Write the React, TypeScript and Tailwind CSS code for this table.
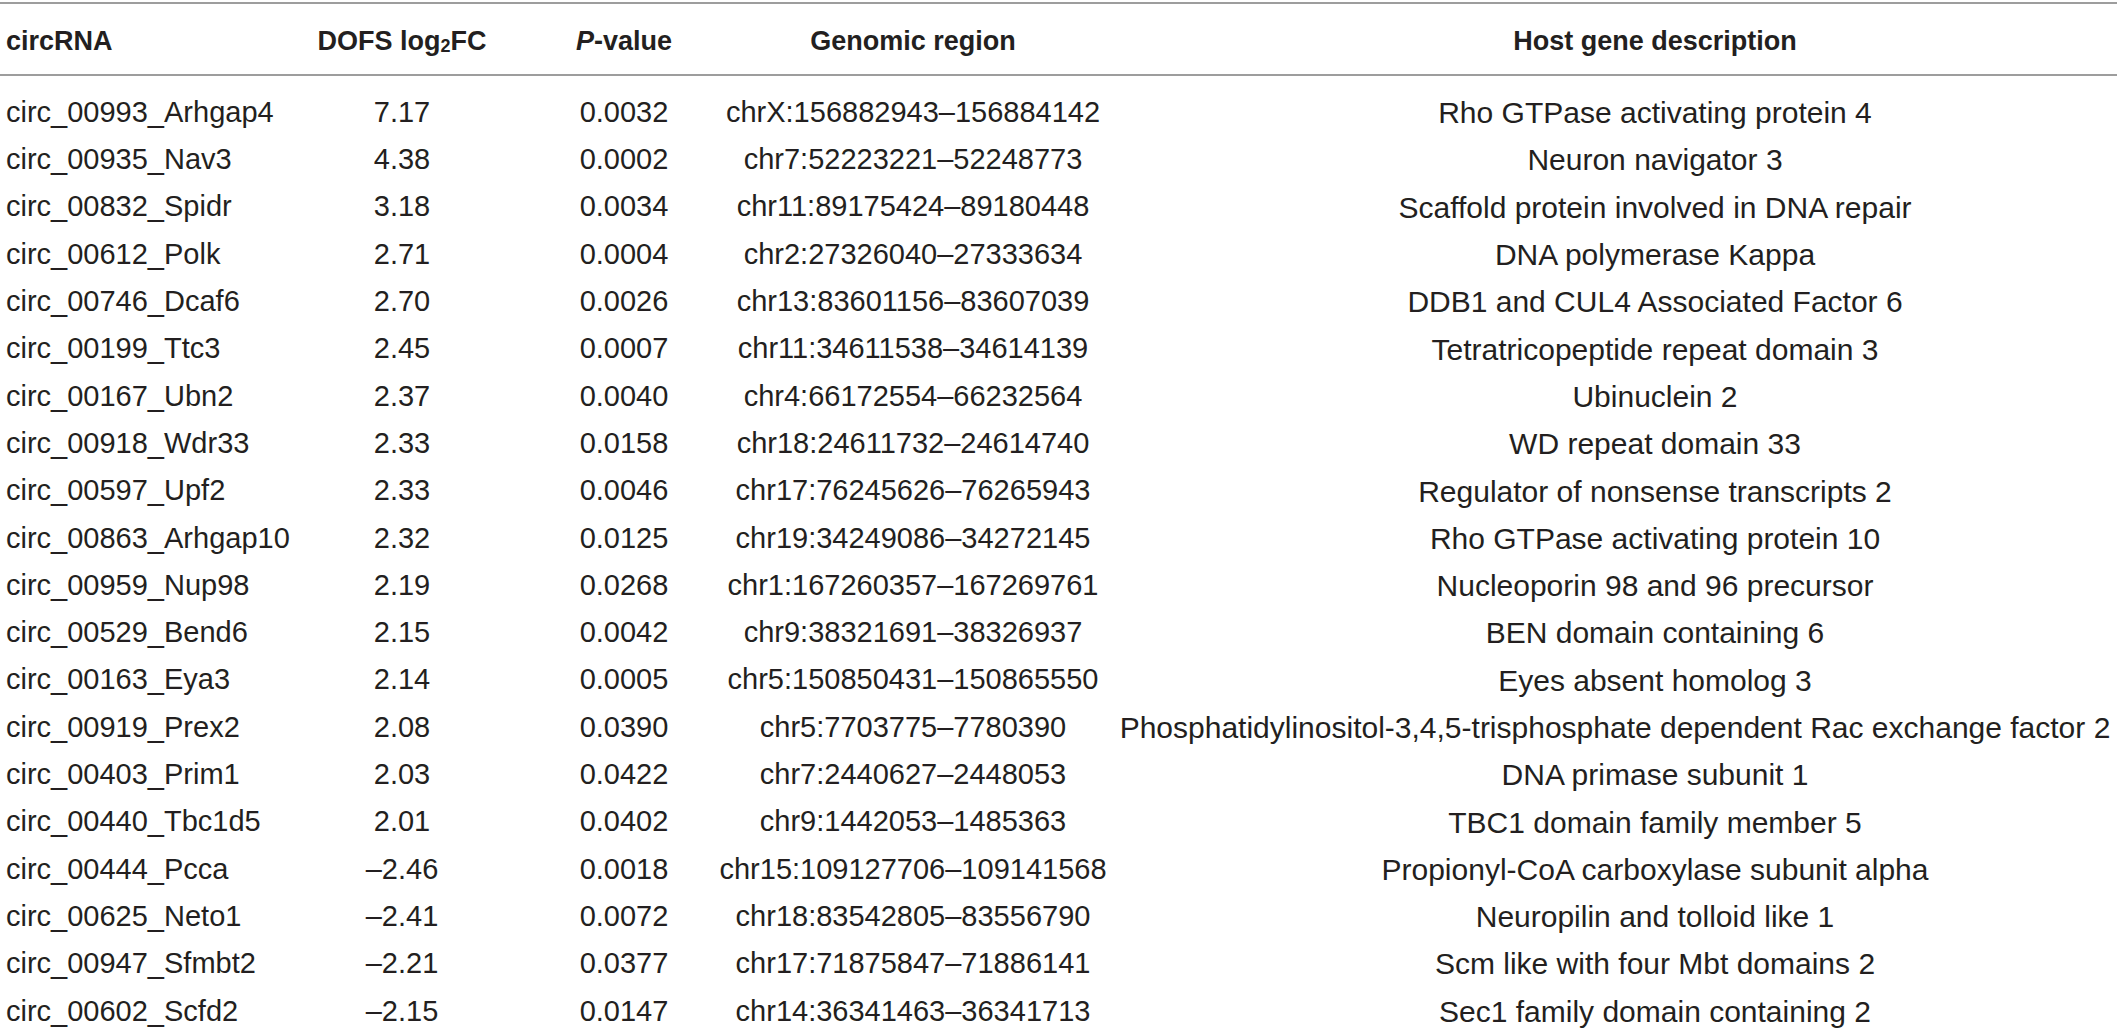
import type { ReactNode } from 'react';

type Row = {
  id: string;
  fc: string;
  p: string;
  region: string;
  host: string;
  wide?: boolean;
};

const rows: Row[] = [
  { id: 'circ_00993_Arhgap4', fc: '7.17', p: '0.0032', region: 'chrX:156882943–156884142', host: 'Rho GTPase activating protein 4' },
  { id: 'circ_00935_Nav3', fc: '4.38', p: '0.0002', region: 'chr7:52223221–52248773', host: 'Neuron navigator 3' },
  { id: 'circ_00832_Spidr', fc: '3.18', p: '0.0034', region: 'chr11:89175424–89180448', host: 'Scaffold protein involved in DNA repair' },
  { id: 'circ_00612_Polk', fc: '2.71', p: '0.0004', region: 'chr2:27326040–27333634', host: 'DNA polymerase Kappa' },
  { id: 'circ_00746_Dcaf6', fc: '2.70', p: '0.0026', region: 'chr13:83601156–83607039', host: 'DDB1 and CUL4 Associated Factor 6' },
  { id: 'circ_00199_Ttc3', fc: '2.45', p: '0.0007', region: 'chr11:34611538–34614139', host: 'Tetratricopeptide repeat domain 3' },
  { id: 'circ_00167_Ubn2', fc: '2.37', p: '0.0040', region: 'chr4:66172554–66232564', host: 'Ubinuclein 2' },
  { id: 'circ_00918_Wdr33', fc: '2.33', p: '0.0158', region: 'chr18:24611732–24614740', host: 'WD repeat domain 33' },
  { id: 'circ_00597_Upf2', fc: '2.33', p: '0.0046', region: 'chr17:76245626–76265943', host: 'Regulator of nonsense transcripts 2' },
  { id: 'circ_00863_Arhgap10', fc: '2.32', p: '0.0125', region: 'chr19:34249086–34272145', host: 'Rho GTPase activating protein 10' },
  { id: 'circ_00959_Nup98', fc: '2.19', p: '0.0268', region: 'chr1:167260357–167269761', host: 'Nucleoporin 98 and 96 precursor' },
  { id: 'circ_00529_Bend6', fc: '2.15', p: '0.0042', region: 'chr9:38321691–38326937', host: 'BEN domain containing 6' },
  { id: 'circ_00163_Eya3', fc: '2.14', p: '0.0005', region: 'chr5:150850431–150865550', host: 'Eyes absent homolog 3' },
  {
    id: 'circ_00919_Prex2',
    fc: '2.08',
    p: '0.0390',
    region: 'chr5:7703775–7780390',
    host: 'Phosphatidylinositol-3,4,5-trisphosphate dependent Rac exchange factor 2',
    wide: true
  },
  { id: 'circ_00403_Prim1', fc: '2.03', p: '0.0422', region: 'chr7:2440627–2448053', host: 'DNA primase subunit 1' },
  { id: 'circ_00440_Tbc1d5', fc: '2.01', p: '0.0402', region: 'chr9:1442053–1485363', host: 'TBC1 domain family member 5' },
  { id: 'circ_00444_Pcca', fc: '–2.46', p: '0.0018', region: 'chr15:109127706–109141568', host: 'Propionyl-CoA carboxylase subunit alpha' },
  { id: 'circ_00625_Neto1', fc: '–2.41', p: '0.0072', region: 'chr18:83542805–83556790', host: 'Neuropilin and tolloid like 1' },
  { id: 'circ_00947_Sfmbt2', fc: '–2.21', p: '0.0377', region: 'chr17:71875847–71886141', host: 'Scm like with four Mbt domains 2' },
  { id: 'circ_00602_Scfd2', fc: '–2.15', p: '0.0147', region: 'chr14:36341463–36341713', host: 'Sec1 family domain containing 2' }
];

const gridCols = 'grid grid-cols-[300px_204px_240px_338px_minmax(0,1fr)]';

function Cell({ children, left }: { children: ReactNode; left?: boolean }) {
  return (
    <div className={left ? 'flex items-center whitespace-nowrap pl-[6px]' : 'flex items-center justify-center whitespace-nowrap'}>
      {children}
    </div>
  );
}

export default function App() {
  return (
    <div
      className="h-[1033px] w-[2117px] overflow-hidden bg-white pt-[2px] text-[#231f20]"
      style={{ fontFamily: '"Liberation Sans", Arial, sans-serif' }}
    >
      <div className={`${gridCols} h-[74px] border-y-2 border-[#9d9d9d] pt-[5px] text-[27px] font-bold`}>
        <Cell left>circRNA</Cell>
        <Cell>
          DOFS log<sub className="text-[18px]">2</sub>FC
        </Cell>
        <Cell>
          <i>P</i>-value
        </Cell>
        <Cell>Genomic region</Cell>
        <div className="flex items-center justify-center whitespace-nowrap pl-[111px]">Host gene description</div>
      </div>
      <div className="pt-[13px] text-[29px]">
        {rows.map((r) => (
          <div key={r.id} className={`${gridCols} h-[47.3px]`}>
            <Cell left>{r.id}</Cell>
            <Cell>{r.fc}</Cell>
            <Cell>{r.p}</Cell>
            <Cell>{r.region}</Cell>
            <div
              className={
                r.wide
                  ? 'flex items-center justify-center whitespace-nowrap pl-[111px] pr-[80px] text-[30px]'
                  : 'flex items-center justify-center whitespace-nowrap pl-[111px] text-[30px]'
              }
            >
              {r.host}
            </div>
          </div>
        ))}
      </div>
    </div>
  );
}
